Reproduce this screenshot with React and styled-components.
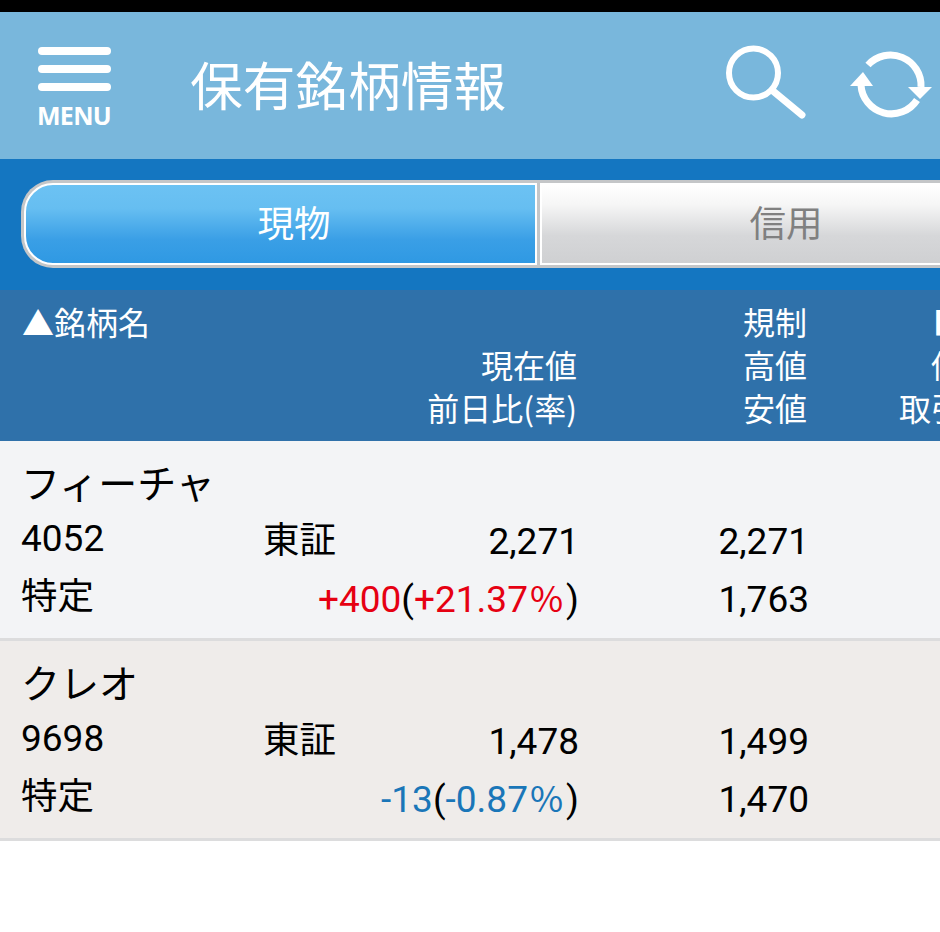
import React from "react";
import styled, { createGlobalStyle } from "styled-components";

const Global = createGlobalStyle`
  html, body { margin: 0; padding: 0; background: #fff; }
  body { font-family: Roboto, "Noto Sans CJK JP", sans-serif; overflow: hidden; }
`;

const Page = styled.div`
  width: 940px;
  height: 932px;
  overflow: hidden;
  background: #fff;
`;
const StatusBar = styled.div`
  height: 12px;
  background: #000;
`;
const Header = styled.header`
  height: 147px;
  background: #79b7dc;
  display: flex;
  align-items: center;
`;
const MenuButton = styled.div`
  width: 73px;
  margin-left: 38px;
  align-self: flex-start;
  margin-top: 35px;
  display: flex;
  flex-direction: column;
  gap: 10px;
`;
const MenuBar = styled.span`
  display: block;
  height: 8px;
  border-radius: 4px;
  background: #fff;
`;
const MenuLabel = styled.span`
  font-family: "Open Sans", sans-serif;
  font-weight: 700;
  font-size: 25px;
  line-height: 26px;
  margin: 1px 0 0 -1px;
  color: #fff;
  letter-spacing: -0.7px;
  white-space: nowrap;
`;
const Title = styled.h1`
  margin: 0 0 6px 79px;
  font-family: "Noto Sans CJK JP", sans-serif;
  font-weight: 400;
  font-size: 52.7px;
  line-height: 60px;
  color: #fff;
  white-space: nowrap;
  flex: 1;
`;
const IconGroup = styled.div`
  display: flex;
  align-items: flex-start;
  align-self: flex-start;
  margin-top: 32px;
  gap: 40px;
  padding-right: 6px;
`;
const SearchSvg = styled.svg`
  display: block;
`;
const RefreshSvg = styled.svg`
  display: block;
  margin-top: 4px;
`;
const TabBand = styled.div`
  height: 131px;
  background: #1476c1;
  padding: 21px 0 0 21px;
  box-sizing: border-box;
  overflow: hidden;
`;
const TabRail = styled.div`
  display: grid;
  grid-template-columns: 513px 492px;
  height: 88px;
  width: 1014px;
  box-sizing: border-box;
  background: #c4c6c8;
  padding: 3px;
  border-radius: 32px 0 0 32px;
  gap: 3px;
`;
const Tab = styled.div`
  display: flex;
  align-items: center;
  justify-content: center;
  font-family: "Noto Sans CJK JP", sans-serif;
  font-size: 36.5px;
  line-height: 1;
  box-sizing: border-box;
  border: 2px solid #fff;
  padding-bottom: 3px;
  padding-left: ${(p) => (p.$active ? "27px" : "0")};
  color: ${(p) => (p.$active ? "#fff" : "#808080")};
  background: ${(p) =>
    p.$active
      ? "linear-gradient(#6cc2f3 0%, #66bef1 30%, #3a9fe6 70%, #2f99e3 100%)"
      : "linear-gradient(#ffffff 0%, #f6f6f6 25%, #d6d7d9 65%, #cfd0d2 100%)"};
  border-radius: ${(p) => (p.$active ? "29px 0 0 29px" : "0")};
`;
const TableHead = styled.div`
  height: 151px;
  background: #2f71aa;
  color: #fff;
  box-sizing: border-box;
  padding-top: 10px;
  display: grid;
  grid-template-columns: 22px 220px 335px 230px 1fr;
  font-family: "Noto Sans CJK JP", sans-serif;
  font-size: 32px;
  line-height: 43px;
  white-space: nowrap;
  overflow: hidden;
`;
const HeadCell = styled.div`
  grid-column: ${(p) => p.$col};
  display: flex;
  flex-direction: column;
  align-items: ${(p) => (p.$right ? "flex-end" : "flex-start")};
`;
const HeadLine = styled.span`
  height: 43px;
  margin-left: ${(p) => p.$indent || 0}px;
`;
const Row = styled.div`
  height: 197px;
  border-bottom: 3px solid #dcdcdd;
  box-sizing: content-box;
  background: ${(p) => p.$bg};
  display: grid;
  grid-template-columns: 21px 242px 72px 244px 230px;
  color: #000;
`;
const Column = styled.div`
  grid-column: ${(p) => p.$col};
  display: flex;
  flex-direction: column;
  padding-top: ${(p) => p.$top}px;
  align-items: ${(p) => (p.$right ? "flex-end" : "flex-start")};
  white-space: nowrap;
`;
const Name = styled.div`
  font-family: "Noto Sans CJK JP", sans-serif;
  font-size: 39px;
  line-height: 58px;
  height: 58px;
`;
const Code = styled.div`
  font-family: Roboto, sans-serif;
  font-size: 37px;
  line-height: 58px;
  height: 55px;
`;
const Jp = styled.div`
  font-family: "Noto Sans CJK JP", sans-serif;
  font-size: 36.5px;
  line-height: 58px;
  height: 58px;
`;
const Num = styled.div`
  font-family: Roboto, "Noto Sans CJK JP", sans-serif;
  font-size: 37px;
  line-height: 58px;
  height: 58px;
`;
const Delta = styled.span`
  color: ${(p) => p.$c};
`;
const Percent = styled.span`
  font-family: "Noto Sans CJK JP", sans-serif;
  font-size: 36px;
  line-height: 0;
  margin: 0 3px 0 2px;
`;

const SearchIcon = () => (
  <SearchSvg width="84" height="76" viewBox="724 44 84 76" fill="none" stroke="#fff">
    <circle cx="753.5" cy="73" r="24.5" strokeWidth="6" />
    <path d="M773 91 L802 115" strokeWidth="7" strokeLinecap="round" />
  </SearchSvg>
);
const RefreshIcon = () => (
  <RefreshSvg width="86" height="74" viewBox="848 48 86 74" fill="none">
    <path d="M868 65 A30.5 30.5 0 0 1 921 87" stroke="#fff" strokeWidth="7" />
    <path d="M917 100 A30.5 30.5 0 0 1 861 85" stroke="#fff" strokeWidth="7" />
    <path d="M863 72 L850 86 L873 86 Z" fill="#fff" />
    <path d="M908 87 L932 87 L920 99 Z" fill="#fff" />
  </RefreshSvg>
);

const rows = [
  { name: "フィーチャ", code: "4052", price: "2,271", d1: "+400", d2: "+21.37", c: "#e60012", hi: "2,271", lo: "1,763", bg: "#f3f4f6" },
  { name: "クレオ", code: "9698", price: "1,478", d1: "-13", d2: "-0.87", c: "#1a76b8", hi: "1,499", lo: "1,470", bg: "#efecea" },
];

export default function App() {
  return (
    <Page>
      <Global />
      <StatusBar />
      <Header>
        <MenuButton>
          <MenuBar />
          <MenuBar />
          <MenuBar />
          <MenuLabel>MENU</MenuLabel>
        </MenuButton>
        <Title>保有銘柄情報</Title>
        <IconGroup>
          <SearchIcon />
          <RefreshIcon />
        </IconGroup>
      </Header>
      <TabBand>
        <TabRail>
          <Tab $active>現物</Tab>
          <Tab>信用</Tab>
        </TabRail>
      </TabBand>
      <TableHead>
        <HeadCell $col={2}>
          <HeadLine>▲銘柄名</HeadLine>
        </HeadCell>
        <HeadCell $col={3} $right>
          <HeadLine>&nbsp;</HeadLine>
          <HeadLine>現在値</HeadLine>
          <HeadLine>前日比(率)</HeadLine>
        </HeadCell>
        <HeadCell $col={4} $right>
          <HeadLine>規制</HeadLine>
          <HeadLine>高値</HeadLine>
          <HeadLine>安値</HeadLine>
        </HeadCell>
        <HeadCell $col={5}>
          <HeadLine $indent={126}>■</HeadLine>
          <HeadLine $indent={124}>値</HeadLine>
          <HeadLine $indent={92}>取引</HeadLine>
        </HeadCell>
      </TableHead>
      {rows.map((r) => (
        <Row key={r.code} $bg={r.bg}>
          <Column $col={2} $top={11}>
            <Name>{r.name}</Name>
            <Code>{r.code}</Code>
            <Jp>特定</Jp>
          </Column>
          <Column $col={3} $top={68}>
            <Jp>東証</Jp>
          </Column>
          <Column $col={4} $right $top={72}>
            <Num>{r.price}</Num>
            <Num>
              <Delta $c={r.c}>{r.d1}</Delta>(
              <Delta $c={r.c}>
                {r.d2}
                <Percent>%</Percent>
              </Delta>
              )
            </Num>
          </Column>
          <Column $col={5} $right $top={72}>
            <Num>{r.hi}</Num>
            <Num>{r.lo}</Num>
          </Column>
        </Row>
      ))}
    </Page>
  );
}
